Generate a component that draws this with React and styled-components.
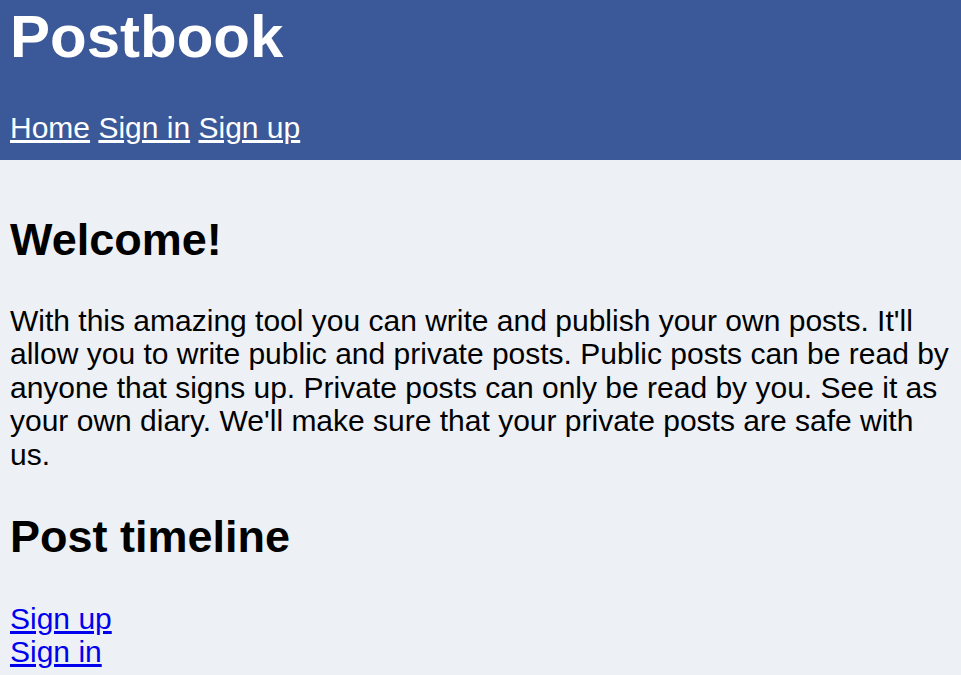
import React from "react";
import styled, { createGlobalStyle } from "styled-components";

const GlobalStyle = createGlobalStyle`
  html, body {
    margin: 0;
    padding: 0;
    background: #edf0f5;
    font-family: "Liberation Sans", Arial, sans-serif;
    font-size: 30px;
    line-height: 1.117;
  }
`;

const Header = styled.header`
  background: #3b5998;
  padding: 3px 10px 15px;
`;

const Title = styled.h1`
  margin: 0 0 41px;
  font-size: 60px;
  line-height: 1.117;
  font-weight: bold;
  color: #ffffff;
`;

const Nav = styled.nav`
  line-height: 1.117;
`;

const NavLink = styled.a`
  color: #ffffff;
  text-decoration: underline;
`;

const Main = styled.main`
  padding: 14px 10px 20px;
  color: #000000;
`;

const Heading = styled.h2`
  margin: 41px 0 39px;
  font-size: 45px;
  line-height: 1.117;
  font-weight: bold;
`;

const Text = styled.p`
  margin: 0;
`;

const LinkList = styled.div`
  display: flex;
  flex-direction: column;
  align-items: flex-start;
`;

const PlainLink = styled.a`
  color: #0000ee;
  text-decoration: underline;
`;

export default function App() {
  return (
    <>
      <GlobalStyle />
      <Header>
        <Title>Postbook</Title>
        <Nav>
          <NavLink href="#">Home</NavLink> <NavLink href="#">Sign in</NavLink>{" "}
          <NavLink href="#">Sign up</NavLink>
        </Nav>
      </Header>
      <Main>
        <Heading>Welcome!</Heading>
        <Text>
          With this amazing tool you can write and publish your own posts. It'll
          allow you to write public and private posts. Public posts can be read
          by anyone that signs up. Private posts can only be read by you. See it
          as your own diary. We'll make sure that your private posts are safe
          with us.
        </Text>
        <Heading>Post timeline</Heading>
        <LinkList>
          <PlainLink href="#">Sign up</PlainLink>
          <PlainLink href="#">Sign in</PlainLink>
        </LinkList>
      </Main>
    </>
  );
}
